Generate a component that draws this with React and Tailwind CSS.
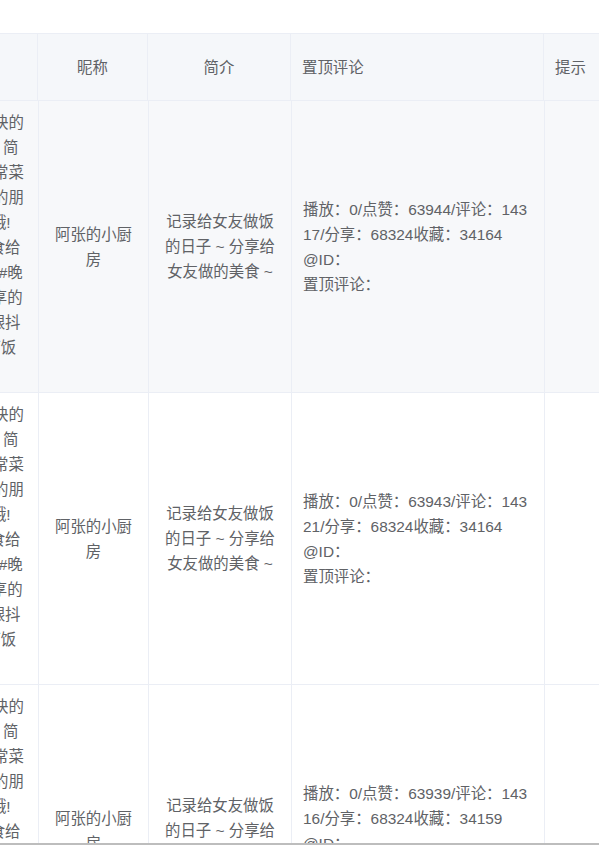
const titleLines = [
  '超级简单又快的',
  '好吃又下饭 简',
  '单易学的家常菜',
  '分享给身边的朋',
  '友们快学哦!',
  '#每天做美食给',
  '可爱的女友 #晚',
  '餐 #美食分享的',
  '#快来一起跟抖',
  '音学做超下饭',
  '菜',
]

const rows = [
  { bg: 'bg-[#f7f8fa]', like: '63944', comment: '14317', share: '68324', fav: '34164' },
  { bg: 'bg-white', like: '63943', comment: '14321', share: '68324', fav: '34164' },
  { bg: 'bg-white', like: '63939', comment: '14316', share: '68324', fav: '34159' },
]

const cell = 'border-r border-[#ebeef5] flex items-center'

function Row({ row }) {
  return (
    <div className={`grid grid-cols-[137px_110px_143px_253px_140px] h-[292px] border-b border-[#ebeef5] ${row.bg}`}>
      <div className={`${cell} justify-center px-[11px] pt-[2px]`}>
        <div className="text-center">
          {titleLines.map((l, i) => (
            <div key={i} className="whitespace-nowrap">{l}</div>
          ))}
        </div>
      </div>
      <div className={`${cell} justify-center px-[11px] text-center`}>阿张的小厨房</div>
      <div className={`${cell} justify-center px-[11px] text-center`}>
        记录给女友做饭的日子{'\u00a0'}~ 分享给女友做的美食{'\u00a0'}~
      </div>
      <div className={`${cell} px-[11px]`}>
        <div className="break-all w-full">
          <div>
            播放：0/点赞：{row.like}/评论：{row.comment}/分享：{row.share}收藏：{row.fav}
          </div>
          <div>@ID：</div>
          <div>置顶评论：</div>
        </div>
      </div>
      <div className={`${cell} px-[11px]`}></div>
    </div>
  )
}

export default function App() {
  return (
    <div
      className="w-[599px] h-[848px] bg-white text-[#606266] text-[15.4px] leading-[25px] flex flex-col"
      style={{ fontFamily: '"Liberation Sans", "Noto Sans CJK SC", sans-serif' }}
    >
      <div className="h-[33px] shrink-0" />
      <div className="h-[810px] shrink-0 overflow-hidden">
        <div className="ml-[-98px] w-max">
          <div className="grid grid-cols-[136px_110px_143px_253px_140px] h-[68px] border-y border-[#ebeef5] bg-[#f5f7fa]">
            <div className={`${cell} justify-center`}>标题</div>
            <div className={`${cell} justify-center`}>昵称</div>
            <div className={`${cell} justify-center`}>简介</div>
            <div className={`${cell} px-[11px]`}>置顶评论</div>
            <div className={`${cell} px-[11px]`}>提示</div>
          </div>
          {rows.map((r, i) => (
            <Row key={i} row={r} />
          ))}
        </div>
      </div>
      <div className="h-[2px] shrink-0 bg-[#bdbdbd]" />
      <div className="flex-1 bg-white" />
    </div>
  )
}
